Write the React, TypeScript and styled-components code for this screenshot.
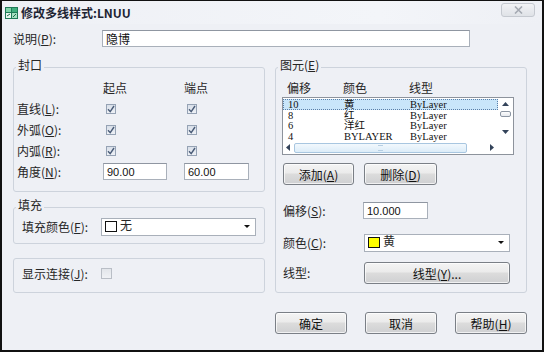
import styled, { createGlobalStyle } from 'styled-components';

const GlobalStyle = createGlobalStyle`
  html, body {
    margin: 0;
    padding: 0;
    background: #ffffff;
  }
  body {
    font-family: "Noto Sans CJK SC", "Liberation Sans", sans-serif;
    font-size: 12px;
    color: #262626;
  }
  u {
    text-decoration-thickness: 1px;
    text-underline-offset: 1px;
  }
`;

const Window = styled.div`
  width: 544px;
  height: 352px;
  box-sizing: border-box;
  border: 2px solid #111;
  border-top-width: 1px;
  background: #eef0f5;
  display: flex;
  flex-direction: column;
  overflow: hidden;
`;

const TitleBar = styled.div`
  height: 23px;
  display: flex;
  align-items: center;
  gap: 3px;
  padding: 0 7px 0 3px;
  background: linear-gradient(90deg, #eef0f5, #f3f5f9 70%, #eef0f5);
`;

const Title = styled.span`
  font-weight: bold;
  font-size: 12px;
  color: #1d2433;
`;

const CloseButton = styled.div`
  margin-left: auto;
  align-self: flex-start;
  margin-top: 2px;
  width: 34px;
  height: 14px;
  box-sizing: border-box;
  border: 1px solid #c5c9d0;
  border-radius: 3px;
  background: linear-gradient(#f2f3f6, #dfe2e7);
  display: flex;
  align-items: center;
  justify-content: center;
`;

const Body = styled.div`
  padding: 0 15px 0 11px;
  display: flex;
  flex-direction: column;
`;

const DescRow = styled.div`
  margin-top: 6px;
  display: flex;
  align-items: center;
`;

const Label = styled.span<{ $w: number }>`
  width: ${(p) => p.$w}px;
  flex: none;
  white-space: nowrap;
  line-height: 16px;
`;

const TextBox = styled.div<{ $w: number; $mono?: boolean }>`
  width: ${(p) => p.$w}px;
  height: 17px;
  box-sizing: border-box;
  border: 1px solid #a9b0ba;
  border-top-color: #8f96a1;
  background: #fff;
  padding: 0 3px;
  display: flex;
  align-items: center;
  font-family: ${(p) => (p.$mono ? '"Liberation Sans", sans-serif' : 'inherit')};
  font-size: ${(p) => (p.$mono ? '11px' : '12px')};
  color: #111;
`;

const Columns = styled.div`
  margin-top: 13px;
  display: flex;
  gap: 10px;
`;

const Column = styled.div`
  width: 252px;
  display: flex;
  flex-direction: column;
`;

const Group = styled.fieldset<{ $h: number; $gap?: number }>`
  margin: ${(p) => p.$gap ?? 0}px 0 0 0;
  padding: 0;
  height: ${(p) => p.$h}px;
  box-sizing: border-box;
  border: 1px solid #cdd3dc;
  border-radius: 3px;
  min-width: 0;
`;

const Legend = styled.legend`
  padding: 0 2px;
  margin-left: 2px;
  line-height: 14px;
  font-size: 12px;
  position: relative;
  top: -2px;
`;

const CapGrid = styled.div`
  padding: 3px 0 0 3px;
  display: grid;
  grid-template-columns: 86px 81px 65px;
  grid-auto-rows: 21px;
  align-items: center;
`;

const Box = styled.span<{ $on?: boolean; $size?: number }>`
  width: ${(p) => p.$size ?? 10}px;
  height: ${(p) => p.$size ?? 10}px;
  box-sizing: border-box;
  margin-left: 3px;
  border: 1px solid ${(p) => (p.$on ? '#95a2b4' : '#b9bec6')};
  background: ${(p) => (p.$on ? 'linear-gradient(#d8dfe9, #eef1f6)' : 'linear-gradient(#e2e5ea, #f0f2f5)')};
  display: flex;
  align-items: center;
  justify-content: center;
`;

const FieldRow = styled.div<{ $top: number; $left: number }>`
  padding: ${(p) => p.$top}px 0 0 ${(p) => p.$left}px;
  display: flex;
  align-items: center;
  min-height: 19px;
`;

const Combo = styled.div<{ $w: number }>`
  width: ${(p) => p.$w}px;
  height: 18px;
  box-sizing: border-box;
  border: 1px solid #a9b0ba;
  background: #fff;
  display: flex;
  align-items: center;
  gap: 3px;
  padding: 0 5px 0 3px;
`;

const Swatch = styled.span<{ $c: string }>`
  width: 12px;
  height: 11px;
  box-sizing: border-box;
  border: 1px solid #111;
  background: ${(p) => p.$c};
`;

const ComboText = styled.span`
  flex: 1;
  line-height: 14px;
  margin-top: -3px;
`;

const ElementBody = styled.div`
  padding: 3px 0 0 6px;
  display: flex;
  flex-direction: column;
`;

const HeaderRow = styled.div`
  height: 20px;
  display: grid;
  grid-template-columns: 56px 66px auto;
  align-items: center;
  padding-left: 5px;
`;

const ListBox = styled.div`
  width: 232px;
  height: 58px;
  box-sizing: border-box;
  border: 1px solid #8d939c;
  background: #fff;
  display: grid;
  grid-template-columns: 1fr 15px;
  grid-template-rows: 43px 1fr;
`;

const Rows = styled.div`
  padding-top: 1px;
  display: flex;
  flex-direction: column;
`;

const ListRow = styled.div<{ $sel?: boolean }>`
  height: 10.5px;
  box-sizing: border-box;
  display: grid;
  grid-template-columns: 56px 66px auto;
  align-items: center;
  padding-left: 4px;
  font-family: "Liberation Serif", "Noto Sans CJK SC", serif;
  font-size: 10.5px;
  line-height: 9px;
  background: ${(p) => (p.$sel ? '#c9e6fa' : 'transparent')};
  border: 1px dotted ${(p) => (p.$sel ? '#5a7fa8' : 'transparent')};
  color: #111;
  overflow: visible;
`;

const VScroll = styled.div`
  display: flex;
  flex-direction: column;
  align-items: center;
  padding-top: 4px;
  gap: 5px;
`;

const VThumb = styled.span`
  width: 11px;
  height: 6px;
  box-sizing: border-box;
  border: 1px solid #8c96a3;
  border-radius: 2px;
  background: linear-gradient(#fdfdfd, #e6e9ee);
`;

const HScroll = styled.div`
  display: flex;
  align-items: center;
  padding: 0 4px 0 3px;
  gap: 4px;
`;

const HThumb = styled.span`
  width: 173px;
  height: 10px;
  box-sizing: border-box;
  border: 1px solid #a8c6e0;
  border-radius: 2px;
  background: linear-gradient(#f2f8fd, #dcecf8);
  display: flex;
  align-items: center;
  justify-content: center;
`;

const Grip = styled.span`
  width: 5px;
  height: 4px;
  border-top: 1px solid #b7cfe3;
  border-bottom: 1px solid #b7cfe3;
`;

const ButtonRow = styled.div`
  margin: 8px 0 0 1px;
  display: flex;
  gap: 10px;
`;

const Button = styled.div<{ $w?: number }>`
  width: ${(p) => p.$w ?? 72}px;
  height: 22px;
  box-sizing: border-box;
  border: 1px solid #7a7f86;
  border-radius: 3px;
  background: linear-gradient(#f4f4f4 0%, #ebebeb 45%, #dcdcdc 50%, #cfd0d2 100%);
  box-shadow: inset 0 0 0 1px rgba(255, 255, 255, 0.7);
  display: flex;
  align-items: center;
  justify-content: center;
  font-size: 12px;
  color: #111;
  white-space: nowrap;
`;

const Footer = styled.div`
  margin-top: 19px;
  display: flex;
  justify-content: flex-end;
  gap: 18px;
`;

const Spacer = styled.span<{ $h?: number }>`
  flex: ${(p) => (p.$h ? 'none' : 1)};
  height: ${(p) => (p.$h ? `${p.$h}px` : 'auto')};
`;

const Arrow = ({ dir }: { dir: 'up' | 'down' | 'left' | 'right' }) => {
  const d = {
    up: 'M0 4 L3.5 0 L7 4 Z',
    down: 'M0 0 L7 0 L3.5 4 Z',
    left: 'M4 0 L4 7 L0 3.5 Z',
    right: 'M0 0 L4 3.5 L0 7 Z',
  }[dir];
  const vertical = dir === 'up' || dir === 'down';
  return (
    <svg width={vertical ? 7 : 4} height={vertical ? 4 : 7} viewBox={vertical ? '0 0 7 4' : '0 0 4 7'}>
      <path d={d} fill="#33435a" />
    </svg>
  );
};

const DropArrow = () => (
  <svg width="6" height="3" viewBox="0 0 6 3">
    <path d="M0 0 L6 0 L3 3 Z" fill="#111" />
  </svg>
);

const Tick = () => (
  <svg width="8" height="8" viewBox="0 0 8 8">
    <path d="M1 4.2 L3.2 6.6 L7 1" fill="none" stroke="#4a5c78" strokeWidth="1.4" />
  </svg>
);

const AppIcon = () => (
  <svg width="13" height="12" viewBox="0 0 13 12">
    <rect x="0" y="0" width="13" height="12" fill="#1f7a57" />
    <rect x="1" y="1" width="5" height="4" fill="#7fd3a8" />
    <rect x="7" y="1" width="5" height="4" fill="#3fae7e" />
    <rect x="1" y="6" width="5" height="5" fill="#e8f5ee" />
    <rect x="7" y="6" width="5" height="5" fill="#a6e0c2" />
    <path d="M2 9 L5 7 M8 10 L11 7" stroke="#1f6b4c" strokeWidth="1" />
  </svg>
);

const CloseX = () => (
  <svg width="9" height="8" viewBox="0 0 9 8">
    <path d="M1 0.5 L8 7.5 M8 0.5 L1 7.5" stroke="#a4a9b2" strokeWidth="1.6" />
  </svg>
);

const capRows: [string, string][] = [
  ['直线', 'L'],
  ['外弧', 'O'],
  ['内弧', 'R'],
];

const elements: [string, string, string, boolean][] = [
  ['10', '黄', 'ByLayer', true],
  ['8', '红', 'ByLayer', false],
  ['6', '洋红', 'ByLayer', false],
  ['4', 'BYLAYER', 'ByLayer', false],
];

function CapRow({ name, hotkey }: { name: string; hotkey: string }) {
  return (
    <>
      <Label $w={86}>
        {name}(<u>{hotkey}</u>):
      </Label>
      <Box $on>
        <Tick />
      </Box>
      <Box $on>
        <Tick />
      </Box>
    </>
  );
}

function App() {
  return (
    <>
      <GlobalStyle />
      <Window>
        <TitleBar>
          <AppIcon />
          <Title>修改多线样式:LNUU</Title>
          <CloseButton>
            <CloseX />
          </CloseButton>
        </TitleBar>
        <Body>
          <DescRow>
            <Label $w={89}>
              说明(<u>P</u>):
            </Label>
            <TextBox $w={368}>隐博</TextBox>
          </DescRow>

          <Columns>
            <Column>
              <Group $h={132}>
                <Legend>封口</Legend>
                <CapGrid>
                  <span />
                  <span>起点</span>
                  <span>端点</span>
                  {capRows.map(([name, key]) => (
                    <CapRow key={name} name={name} hotkey={key} />
                  ))}
                  <Label $w={86}>
                    角度(<u>N</u>):
                  </Label>
                  <TextBox $w={64} $mono>
                    90.00
                  </TextBox>
                  <TextBox $w={65} $mono>
                    60.00
                  </TextBox>
                </CapGrid>
              </Group>

              <Group $h={44} $gap={8}>
                <Legend>填充</Legend>
                <FieldRow $top={3} $left={8}>
                  <Label $w={79}>
                    填充颜色(<u>F</u>):
                  </Label>
                  <Combo $w={155}>
                    <Swatch $c="#ffffff" />
                    <ComboText>无</ComboText>
                    <DropArrow />
                  </Combo>
                </FieldRow>
              </Group>

              <Group $h={35} $gap={14}>
                <FieldRow $top={5} $left={8}>
                  <Label $w={76}>
                    显示连接(<u>J</u>):
                  </Label>
                  <Box $size={11} />
                </FieldRow>
              </Group>
            </Column>

            <Column>
              <Group $h={233}>
                <Legend>
                  图元(<u>E</u>)
                </Legend>
                <ElementBody>
                  <HeaderRow>
                    <span>偏移</span>
                    <span>颜色</span>
                    <span>线型</span>
                  </HeaderRow>
                  <ListBox>
                    <Rows>
                      {elements.map(([off, color, type, sel]) => (
                        <ListRow key={off} $sel={sel}>
                          <span>{off}</span>
                          <span>{color}</span>
                          <span>{type}</span>
                        </ListRow>
                      ))}
                    </Rows>
                    <VScroll>
                      <Arrow dir="up" />
                      <VThumb />
                      <Spacer />
                      <Arrow dir="down" />
                      <Spacer $h={2} />
                    </VScroll>
                    <HScroll>
                      <Arrow dir="left" />
                      <HThumb>
                        <Grip />
                      </HThumb>
                      <Spacer />
                      <Arrow dir="right" />
                    </HScroll>
                    <span />
                  </ListBox>
                  <ButtonRow>
                    <Button $w={71}>
                      添加(<u>A</u>)
                    </Button>
                    <Button $w={73}>
                      删除(<u>D</u>)
                    </Button>
                  </ButtonRow>

                  <FieldRow $top={16} $left={1}>
                    <Label $w={80}>
                      偏移(<u>S</u>):
                    </Label>
                    <TextBox $w={65} $mono>
                      10.000
                    </TextBox>
                  </FieldRow>
                  <FieldRow $top={13} $left={1}>
                    <Label $w={81}>
                      颜色(<u>C</u>):
                    </Label>
                    <Combo $w={146}>
                      <Swatch $c="#ffff00" />
                      <ComboText>黄</ComboText>
                      <DropArrow />
                    </Combo>
                  </FieldRow>
                  <FieldRow $top={10} $left={1}>
                    <Label $w={81}>线型:</Label>
                    <Button $w={146}>
                      线型(<u>Y</u>)...
                    </Button>
                  </FieldRow>
                </ElementBody>
              </Group>
            </Column>
          </Columns>

          <Footer>
            <Button>确定</Button>
            <Button>取消</Button>
            <Button>
              帮助(<u>H</u>)
            </Button>
          </Footer>
        </Body>
      </Window>
    </>
  );
}

export default App;
